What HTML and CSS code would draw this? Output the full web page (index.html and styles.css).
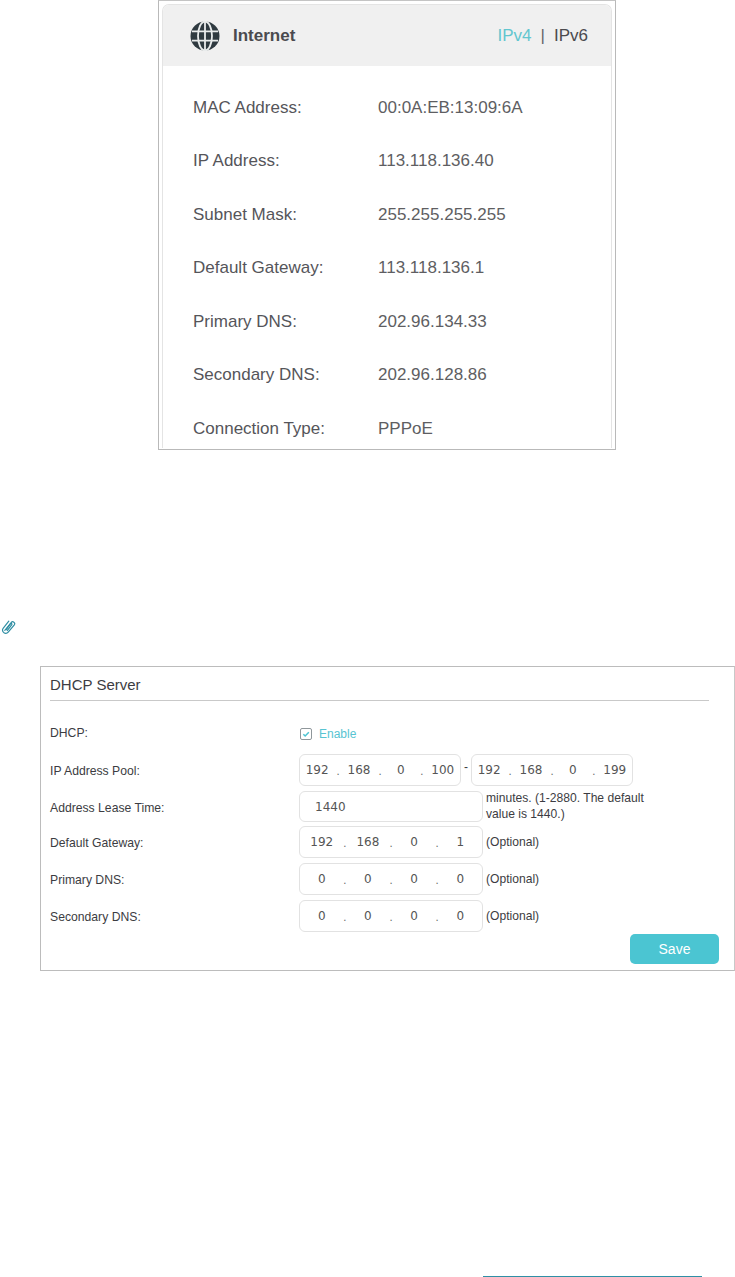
FILE: index.html
```html
<!DOCTYPE html>
<html lang="en">
<head>
<meta charset="utf-8">
<title>Internet and DHCP Server</title>
<link rel="stylesheet" href="styles.css">
</head>
<body>
<section class="shot">
  <div class="card">
    <header class="card-head">
      <svg class="globe" viewBox="0 0 30 30" aria-hidden="true">
        <circle cx="15" cy="15" r="14.5" fill="#2f3a40"/>
        <g fill="none" stroke="#e9ecec" stroke-width="1.8">
          <ellipse cx="15" cy="15" rx="7" ry="14.5"/>
          <path d="M2 10.4h26M2 19.6h26M15 1v28"/>
        </g>
      </svg>
      <span class="card-title">Internet</span>
      <span class="tabs"><span class="tab-on">IPv4</span><span class="tab-sep">|</span><span>IPv6</span></span>
    </header>
    <dl class="info">
      <dt>MAC Address:</dt><dd>00:0A:EB:13:09:6A</dd>
      <dt>IP Address:</dt><dd>113.118.136.40</dd>
      <dt>Subnet Mask:</dt><dd>255.255.255.255</dd>
      <dt>Default Gateway:</dt><dd>113.118.136.1</dd>
      <dt>Primary DNS:</dt><dd>202.96.134.33</dd>
      <dt>Secondary DNS:</dt><dd>202.96.128.86</dd>
      <dt>Connection Type:</dt><dd>PPPoE</dd>
    </dl>
  </div>
</section>

<svg class="clip" viewBox="0 0 16 16" aria-hidden="true">
  <g fill="none" stroke="#2f8ea3" stroke-width="1.2" stroke-linecap="round">
    <path d="M6.4 10.4 11.2 3.6a1.9 1.9 0 0 1 3.1 2.2L8.2 13.2a3.2 3.2 0 0 1-5-.2 3.2 3.2 0 0 1 .1-3.9L8.8 2.2"/>
    <path d="M4.8 11.4 10.4 4.6a.9.9 0 0 1 1.4 1.1L7.2 11.6"/>
  </g>
</svg>

<section class="panel">
  <h2 class="panel-title">DHCP Server</h2>
  <div class="form">
    <div class="row row-check">
      <label class="lbl">DHCP:</label>
      <span class="check"><svg viewBox="0 0 12 12" aria-hidden="true"><path d="M2.8 6.2 5 8.4 9.4 3.8" fill="none" stroke="#4dc4d2" stroke-width="1.8"/></svg></span>
      <span class="enable">Enable</span>
    </div>
    <div class="row row-pool">
      <label class="lbl">IP Address Pool:</label>
      <div class="ip ip-short"><span>192</span><i>.</i><span>168</span><i>.</i><span>0</span><i>.</i><span>100</span></div>
      <span class="dash">-</span>
      <div class="ip ip-short"><span>192</span><i>.</i><span>168</span><i>.</i><span>0</span><i>.</i><span>199</span></div>
    </div>
    <div class="row row-lease">
      <label class="lbl">Address Lease Time:</label>
      <div class="ip ip-lease">1440</div>
      <span class="note note-wide">minutes. (1-2880. The default value is 1440.)</span>
    </div>
    <div class="row">
      <label class="lbl">Default Gateway:</label>
      <div class="ip"><span>192</span><i>.</i><span>168</span><i>.</i><span>0</span><i>.</i><span>1</span></div>
      <span class="note">(Optional)</span>
    </div>
    <div class="row">
      <label class="lbl">Primary DNS:</label>
      <div class="ip"><span>0</span><i>.</i><span>0</span><i>.</i><span>0</span><i>.</i><span>0</span></div>
      <span class="note">(Optional)</span>
    </div>
    <div class="row">
      <label class="lbl">Secondary DNS:</label>
      <div class="ip"><span>0</span><i>.</i><span>0</span><i>.</i><span>0</span><i>.</i><span>0</span></div>
      <span class="note">(Optional)</span>
    </div>
  </div>
  <div class="actions"><button class="save" type="button">Save</button></div>
</section>

<div class="foot-line"></div>
</body>
</html>
```
FILE: styles.css
```css
html, body {
  margin: 0;
  padding: 0;
  background: #fff;
}
body {
  width: 735px;
  height: 1277px;
  overflow: hidden;
  font-family: "Liberation Sans", Arial, sans-serif;
  color: #3c3c40;
}

/* top screenshot figure */
.shot {
  box-sizing: border-box;
  width: 458px;
  height: 450px;
  margin-left: 158px;
  padding: 4px 3px 0 3px;
  border: 1px solid #b9b9b9;
  border-top-color: #c4c4c4;
  overflow: hidden;
}
.card {
  height: 100%;
  border: 1px solid #e4e4e4;
  border-bottom: 0;
  border-radius: 7px 7px 0 0;
  box-sizing: border-box;
  margin-top: -1px;
}
.card-head {
  display: flex;
  align-items: center;
  height: 61px;
  padding: 0 23px 0 27px;
  background: #f0f0f0;
  border-radius: 6px 6px 0 0;
}
.globe {
  width: 30px;
  height: 30px;
  margin-right: 13px;
}
.card-title {
  font-size: 17px;
  font-weight: 700;
  color: #4a4a4e;
  flex: 1;
}
.tabs {
  display: flex;
  gap: 9px;
  font-size: 17px;
  color: #4a4a4e;
}
.tab-on { color: #62c6cf; }
.tab-sep { color: #666; }
.info {
  display: grid;
  grid-template-columns: 185px 1fr;
  grid-auto-rows: 53.5px;
  align-items: center;
  margin: 15px 0 0 30px;
  font-size: 17px;
  color: #55555a;
}
.info dt { margin: 0; }
.info dd { margin: 0; color: #5e5e62; }

/* paperclip */
.clip {
  display: block;
  width: 16px;
  height: 16px;
  margin: 169px 0 0 0;
}

/* DHCP panel */
.panel {
  box-sizing: border-box;
  width: 695px;
  height: 305px;
  margin: 31px 0 0 40px;
  padding: 0 15px 0 9px;
  border: 1px solid #bcbcbc;
  border-right-color: #c8c8c8;
}
.panel-title {
  width: 659px;
  height: 34px;
  margin: 0;
  box-sizing: border-box;
  padding-top: 9px;
  font-size: 15px;
  line-height: 17px;
  font-weight: 400;
  color: #3c3c42;
  border-bottom: 1px solid #c9c9c9;
}
.form {
  display: flex;
  flex-direction: column;
  margin-top: 22px;
}
.row {
  display: flex;
  align-items: flex-start;
  height: 32px;
  margin-bottom: 5px;
}
.row-check {
  height: 21px;
  margin-bottom: 10px;
  align-items: center;
}
.row-pool { margin-bottom: 5px; }
.row-lease { height: 31px; margin-bottom: 4px; }
.lbl {
  width: 249px;
  flex: none;
  font-size: 12.2px;
  line-height: 21px;
  color: #3c3c42;
  padding-top: 7px;
}
.row-check .lbl { padding-top: 0; }
.check {
  display: flex;
  box-sizing: border-box;
  width: 12px;
  height: 12px;
  margin: 0 7px 0 1px;
  border: 1px solid #8f979b;
  border-radius: 2px;
}
.check svg { width: 10px; height: 10px; }
.enable {
  font-size: 12px;
  color: #58c4d2;
}
.ip {
  box-sizing: border-box;
  display: flex;
  align-items: center;
  justify-content: space-around;
  flex: none;
  width: 184px;
  height: 32px;
  padding: 0 2px;
  border: 1px solid #e2e2e2;
  border-radius: 6px;
  font-family: "DejaVu Sans", sans-serif;
  font-size: 12px;
  color: #555;
}
.ip span {
  width: 36px;
  text-align: center;
}
.ip i {
  font-style: normal;
  font-size: 10px;
  padding-top: 3px;
  color: #666;
}
.ip-short { width: 162px; padding: 0; }
.ip-short span { width: 30px; }
.ip-lease {
  justify-content: flex-start;
  height: 31px;
  padding-left: 15px;
}
.dash {
  width: 10px;
  flex: none;
  font-size: 12px;
  line-height: 26px;
  text-align: center;
}
.note {
  margin-left: 3px;
  font-size: 12.1px;
  line-height: 16px;
  padding-top: 8px;
  color: #3c3c42;
}
.note-wide {
  width: 170px;
  padding-top: 0;
  margin-top: -1px;
}
.actions {
  display: flex;
  justify-content: flex-end;
  margin-top: -3px;
}
.save {
  width: 89px;
  height: 30px;
  padding: 0;
  border: 0;
  border-radius: 5px;
  background: #4bc5d2;
  color: #fff;
  font-family: inherit;
  font-size: 14px;
}

.foot-line {
  width: 219px;
  height: 1px;
  margin: 305px 0 0 483px;
  background: #2f90a6;
}
```
